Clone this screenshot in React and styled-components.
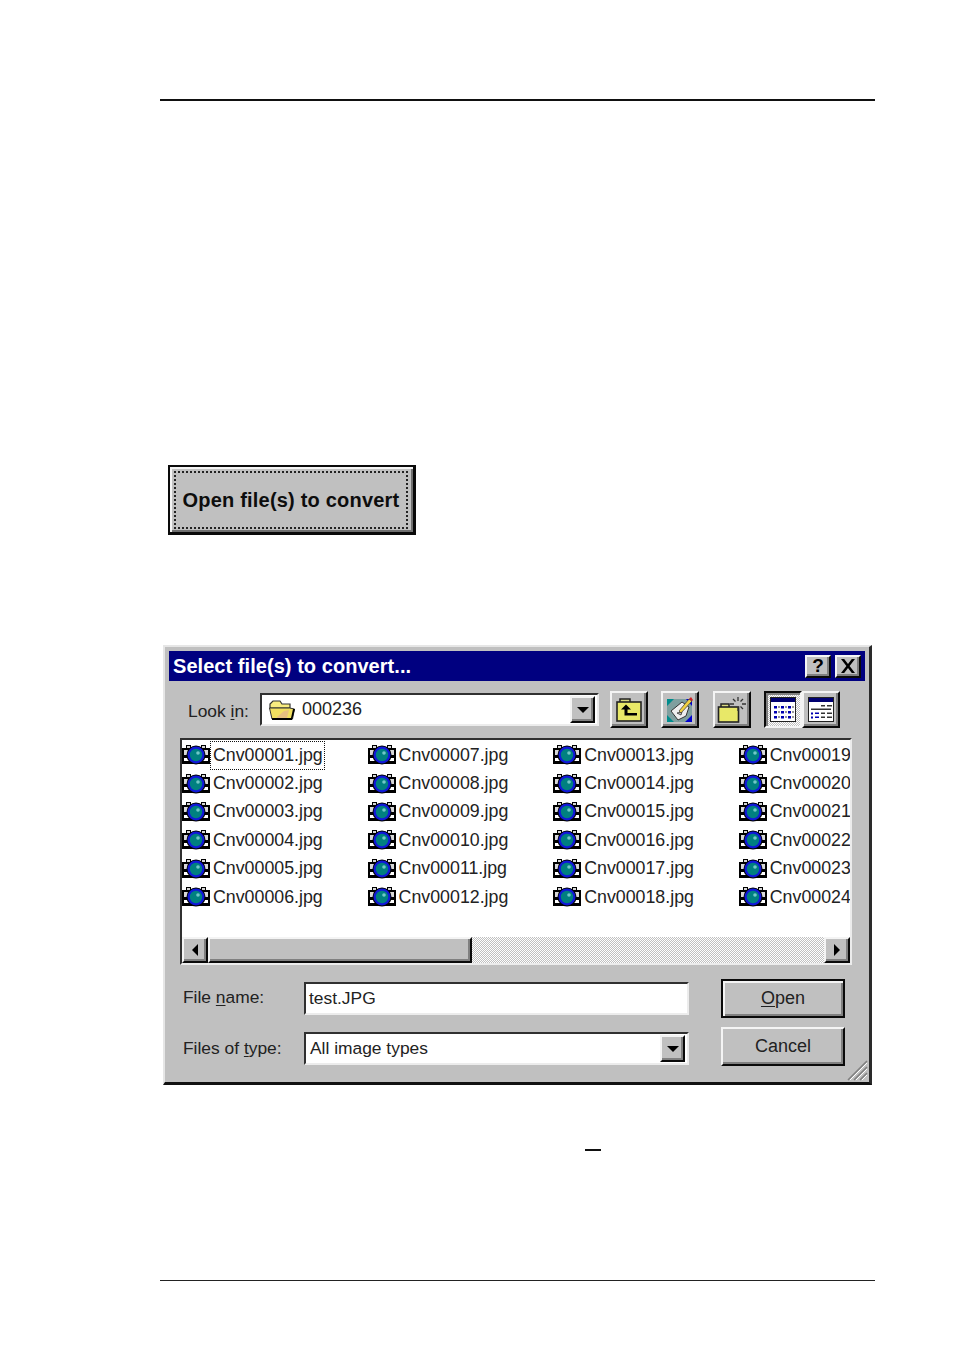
import React from 'react';
import styled, { createGlobalStyle, css } from 'styled-components';

const Global = createGlobalStyle`
  * { box-sizing: border-box; }
  html, body { margin: 0; background: #fff; }
  body { font-family: "Liberation Sans", Arial, sans-serif; color: #1a1a1a; }
`;

const raised = css`
  border-style: solid;
  border-width: 2px;
  border-color: #f4f4f4 #0a0a0a #0a0a0a #f4f4f4;
  box-shadow: inset -2px -2px 0 #808080;
  background: #c0c0c0;
`;
const sunken = css`
  border-style: solid;
  border-width: 2px;
  border-color: #303030 #ececec #ececec #303030;
`;

const Page = styled.div`
  width: 954px;
  height: 1351px;
  padding: 99px 79px 0 160px;
  overflow: hidden;
`;
const HeaderRule = styled.div`height: 2px; background: #111;`;
const FooterRule = styled.div`height: 1px; margin-top: 129px; background: #222;`;
const Dash = styled.div`width: 16px; height: 2px; margin: 64px 0 0 425px; background: #111;`;

const BigButton = styled.div`
  width: 248px;
  height: 70px;
  margin: 364px 0 0 8px;
  padding: 4px 5px 3px 4px;
  background: #c0c0c0;
  border: 2px solid #0a0a0a;
  border-right-width: 3px;
  border-bottom-width: 3px;
  box-shadow: inset 2px 2px 0 #f4f4f4, inset -2px -2px 0 #707070;
`;
const FocusRect = styled.div`
  height: 100%;
  border: 2px dotted #222;
  display: flex;
  align-items: center;
  justify-content: center;
  font: bold 20px "Liberation Sans", sans-serif;
  letter-spacing: 0.2px;
  color: #0d0d0d;
  white-space: nowrap;
`;

const Dialog = styled.div`
  position: relative;
  width: 709px;
  height: 440px;
  margin: 110px 0 0 3px;
  padding: 4px 4px 0 4px;
  background: #c0c0c0;
  border-style: solid;
  border-width: 2px 3px 3px 2px;
  border-color: #e6e6e6 #2a2a2a #111 #e6e6e6;
`;
const TitleBar = styled.div`
  height: 30px;
  display: flex;
  align-items: center;
  gap: 4px;
  padding: 0 4px;
  background: #000080;
`;
const TitleText = styled.div`
  flex: 1;
  color: #fff;
  font: bold 20px "Liberation Sans", sans-serif;
  letter-spacing: 0.05px;
  white-space: nowrap;
`;
const CaptionButton = styled.div`
  ${raised}
  width: 26px;
  height: 23px;
  display: flex;
  align-items: center;
  justify-content: center;
  font: bold 19px "Liberation Sans", sans-serif;
  color: #000;
`;

const Toolbar = styled.div`
  display: flex;
  align-items: center;
  height: 37px;
  margin-top: 10px;
  padding-left: 19px;
`;
const Label = styled.div`
  font-size: 17.4px;
  white-space: nowrap;
  color: #222;
  u { text-underline-offset: 2px; text-decoration-thickness: 1px; }
`;
const LookLabel = styled(Label)`width: 72px; padding-top: 3px;`;
const TypeLabel = styled(Label)`padding-top: 3px;`;
const NameLabel = styled(Label)`padding-bottom: 2px;`;
const Combo = styled.div`
  ${sunken}
  display: flex;
  align-items: center;
  background: #fff;
  font-size: 17.4px;
  color: #222;
`;
const LookCombo = styled(Combo)`
  width: 339px;
  height: 33px;
  padding: 0 2px 0 6px;
  gap: 6px;
  font-size: 18px;
`;
const ComboText = styled.div`flex: 1; white-space: nowrap;`;
const ArrowButton = styled.div`
  ${raised}
  width: 25px;
  height: 27px;
  display: flex;
  align-items: center;
  justify-content: center;
`;
const ToolButton = styled.div`
  ${raised}
  width: 38px;
  height: 37px;
  margin-left: ${p => p.$gap}px;
  display: flex;
  align-items: center;
  justify-content: center;
`;
const PressedButton = styled.div`
  width: 38px;
  height: 37px;
  margin-left: 13px;
  display: flex;
  align-items: center;
  justify-content: center;
  border-style: solid;
  border-width: 2px;
  border-color: #0a0a0a #f4f4f4 #f4f4f4 #0a0a0a;
  box-shadow: inset 2px 2px 0 #808080;
  background: repeating-conic-gradient(#fff 0 25%, #c0c0c0 0 50%) 0 0 / 2px 2px;
`;

const ListFrame = styled.div`
  ${sunken}
  width: 672px;
  height: 227px;
  margin: 10px 0 0 11px;
  display: flex;
  flex-direction: column;
  background: #fff;
`;
const FileGrid = styled.div`
  flex: 1;
  min-height: 0;
  overflow: hidden;
  display: grid;
  grid-auto-flow: column;
  grid-template-rows: repeat(6, 28.4px);
  grid-auto-columns: 185.6px;
  padding-top: 1px;
`;
const FileItem = styled.div`
  display: flex;
  align-items: center;
  gap: 1px;
  font-size: 17.8px;
  color: #222;
  white-space: nowrap;
`;
const FileName = styled.span`
  padding: 0 1px 0 2px;
  line-height: 27px;
  outline: ${p => (p.$focus ? '1px dotted #111' : 'none')};
`;
const ScrollBar = styled.div`
  height: 26px;
  display: flex;
  background: repeating-conic-gradient(#fff 0 25%, #c0c0c0 0 50%) 0 0 / 2px 2px;
`;
const ScrollButton = styled.div`
  ${raised}
  width: 26px;
  display: flex;
  align-items: center;
  justify-content: center;
`;
const ScrollThumb = styled.div`
  ${raised}
  width: 264px;
`;
const ScrollTrack = styled.div`flex: 1;`;

const Form = styled.div`
  display: grid;
  grid-template-columns: 121px 385px 156px;
  grid-template-rows: 39px 39px;
  row-gap: 9px;
  margin: 14px 0 0 14px;
  align-items: center;
`;
const FormField = styled(Combo)`
  height: 33px;
  padding-left: 3px;
`;
const TypeCombo = styled(Combo)`
  height: 33px;
  padding: 0 2px 0 4px;
  align-self: end;
  margin-bottom: 1px;
`;
const DialogButton = styled.div`
  margin-left: 32px;
  height: 39px;
  display: flex;
  align-items: center;
  justify-content: center;
  font-size: 18px;
  color: #222;
  ${p => p.$default ? css`
    background: #c0c0c0;
    border: 2px solid #0a0a0a;
    box-shadow: inset 2px 2px 0 #f4f4f4, inset -2px -2px 0 #808080;
  ` : raised}
  u { text-underline-offset: 2px; text-decoration-thickness: 1px; }
`;
const GripIcon = styled.svg`
  position: absolute;
  right: 1px;
  bottom: 1px;
`;

const FilmIcon = () => (
  <svg width="28" height="24" viewBox="0 0 28 24">
    <path d="M0 5h4V2h5v3h10V2h5v3h4v16H0z" fill="#000" />
    <path d="M2 7h4v5H2zM22 7h4v5h-4zM5 3h3v2H5zM20 3h3v2h-3z" fill="#d8d8d8" />
    <path d="M2 15h24v3H2z" fill="#fff" />
    <circle cx="14" cy="12" r="9.500" fill="#000" />
    <circle cx="14" cy="12" r="8.500" fill="#1018d8" />
    <circle cx="14" cy="12" r="6.200" fill="#008080" />
    <circle cx="16" cy="10" r="1.800" fill="#70c8c8" />
  </svg>
);
const OpenFolder = () => (
  <svg width="28" height="24" viewBox="0 0 28 24">
    <path d="M2 6l3-3h7l2 3h8v4H2z" fill="#f8ec80" stroke="#333" strokeWidth="1.200" />
    <path d="M1.500 10h20l5 1-2 10H4z" fill="#f2e060" stroke="#333" strokeWidth="1" />
    <path d="M9 19l7-6 5-1-2 8H9z" fill="#e8c080" />
    <path d="M4 22h20l3-11h-2l-2 9H4z" fill="#000" />
  </svg>
);
const UpFolder = () => (
  <svg width="28" height="26" viewBox="0 0 28 26">
    <path d="M5 5V2h10v3" fill="#d8d880" stroke="#222" strokeWidth="1.500" />
    <rect x="2" y="5" width="24" height="19" fill="#e8e868" stroke="#222" strokeWidth="1.600" />
    <path d="M6 12.500l5-5 5 5h-3.500V16H22v2.500H9.500v-6z" fill="#000" />
  </svg>
);
const EditIcon = () => (
  <svg width="28" height="27" viewBox="0 0 28 27">
    <rect x="1" y="3" width="25" height="23" fill="#7f9f9f" />
    <path d="M1 3h7L1 10zM1 26v-7l7 7z" fill="#008c8c" />
    <path d="M26 19v7h-7zM20 3h6v7z" fill="#0000d0" />
    <path d="M5 15L16 6l7 5-3 9-8 4z" fill="#eee" stroke="#333" strokeWidth="1" />
    <path d="M11 17l4 2 1-3z" fill="#bbb" stroke="#333" strokeWidth=".8" />
    <path d="M13 15L23 3l3 2-11 12z" fill="#f0d040" stroke="#333" strokeWidth=".7" />
    <path d="M23 3l2-2 2 3-1 1z" fill="#d02020" />
  </svg>
);
const NewFolder = () => (
  <svg width="30" height="28" viewBox="0 0 30 28">
    <path d="M4 11V8h8v3" fill="#d8d880" stroke="#222" strokeWidth="1.500" />
    <rect x="1.500" y="11" width="20" height="15" fill="#e8e868" stroke="#222" strokeWidth="1.600" />
    <path d="M21 1v4M21 11v4M13 8h4M25 8h4M16 3l2.500 2.500M26 3l-2.500 2.500M26 13l-2.500-2.500" stroke="#333" strokeWidth="1.300" />
  </svg>
);
const ListViewIcon = () => (
  <svg width="26" height="25" viewBox="0 0 26 25">
    <rect x="0.500" y="0.500" width="25" height="24" fill="#fff" stroke="#222" />
    <rect x="1" y="1" width="24" height="4" fill="#000070" />
    <path d="M4 9h3v2.500H4zM4 14h3v2.500H4zM4 19h3v2.500H4zM11 9h3v2.500h-3zM11 14h3v2.500h-3zM11 19h3v2.500h-3zM18 9h3v2.500h-3zM18 14h3v2.500h-3zM18 19h3v2.500h-3z" fill="#0000b0" />
    <path d="M8 9h2v2H8zM8 14h2v2H8zM8 19h2v2H8zM15 9h2v2h-2zM15 14h2v2h-2zM15 19h2v2h-2zM22 9h2v2h-2zM22 14h2v2h-2zM22 19h2v2h-2z" fill="#999" />
  </svg>
);
const DetailViewIcon = () => (
  <svg width="26" height="25" viewBox="0 0 26 25">
    <rect x="0.500" y="0.500" width="25" height="24" fill="#fff" stroke="#222" />
    <rect x="1" y="1" width="24" height="4" fill="#000070" />
    <path d="M13 8h4v1.500h-4zM19 8h5v1.500h-5zM3 11.500h20V13H3zM13 15.500h4V17h-4zM19 15.500h5V17h-5zM13 19.500h4V21h-4zM19 19.500h5V21h-5z" fill="#333" />
    <path d="M3 15.500h2v2H3zM3 19.500h2v2H3zM7 15.500h4V17H7zM7 19.500h4V21H7z" fill="#0000b0" />
  </svg>
);
const Triangle = ({ dir }) => {
  const paths = { down: 'M0 0h12L6 6z', left: 'M7 0v12L1 6z', right: 'M1 0v12l6-6z' };
  const size = dir === 'down' ? [12, 6] : [8, 12];
  return (
    <svg width={size[0]} height={size[1]} viewBox={`0 0 ${size[0]} ${size[1]}`}>
      <path d={paths[dir]} fill="#000" />
    </svg>
  );
};
const CloseX = () => (
  <svg width="16" height="14" viewBox="0 0 16 14">
    <path d="M1 0h3.200L8 5l3.800-5H15L9.600 7 15 14h-3.200L8 9l-3.800 5H1l5.400-7z" fill="#000" />
  </svg>
);

const Rows = Array.from({ length: 24 }, (_, i) => `Cnv${String(i + 1).padStart(5, '0')}.jpg`);

export default function App() {
  return (
    <Page>
      <Global />
      <HeaderRule />
      <BigButton>
        <FocusRect>Open file(s) to convert</FocusRect>
      </BigButton>
      <Dialog>
        <TitleBar>
          <TitleText>Select file(s) to convert...</TitleText>
          <CaptionButton>?</CaptionButton>
          <CaptionButton><CloseX /></CaptionButton>
        </TitleBar>
        <Toolbar>
          <LookLabel>Look <u>i</u>n:</LookLabel>
          <LookCombo>
            <OpenFolder />
            <ComboText>000236</ComboText>
            <ArrowButton><Triangle dir="down" /></ArrowButton>
          </LookCombo>
          <ToolButton $gap={11}><UpFolder /></ToolButton>
          <ToolButton $gap={13}><EditIcon /></ToolButton>
          <ToolButton $gap={14}><NewFolder /></ToolButton>
          <PressedButton><ListViewIcon /></PressedButton>
          <ToolButton $gap={0}><DetailViewIcon /></ToolButton>
        </Toolbar>
        <ListFrame>
          <FileGrid>
            {Rows.map((name, i) => (
              <FileItem key={name}>
                <FilmIcon />
                <FileName $focus={i === 0}>{name}</FileName>
              </FileItem>
            ))}
          </FileGrid>
          <ScrollBar>
            <ScrollButton><Triangle dir="left" /></ScrollButton>
            <ScrollThumb />
            <ScrollTrack />
            <ScrollButton><Triangle dir="right" /></ScrollButton>
          </ScrollBar>
        </ListFrame>
        <Form>
          <NameLabel>File <u>n</u>ame:</NameLabel>
          <FormField>test.JPG</FormField>
          <DialogButton $default><span><u>O</u>pen</span></DialogButton>
          <TypeLabel>Files of <u>t</u>ype:</TypeLabel>
          <TypeCombo>
            <ComboText>All image types</ComboText>
            <ArrowButton><Triangle dir="down" /></ArrowButton>
          </TypeCombo>
          <DialogButton>Cancel</DialogButton>
        </Form>
        <GripIcon width="22" height="22" viewBox="0 0 22 22">
          <path d="M2 21L21 2M8 21L21 8M14 21l7-7" stroke="#808080" strokeWidth="1.600" />
          <path d="M4 21L21 4M10 21L21 10M16 21l5-5" stroke="#fff" strokeWidth="1" />
        </GripIcon>
      </Dialog>
      <Dash />
      <FooterRule />
    </Page>
  );
}
